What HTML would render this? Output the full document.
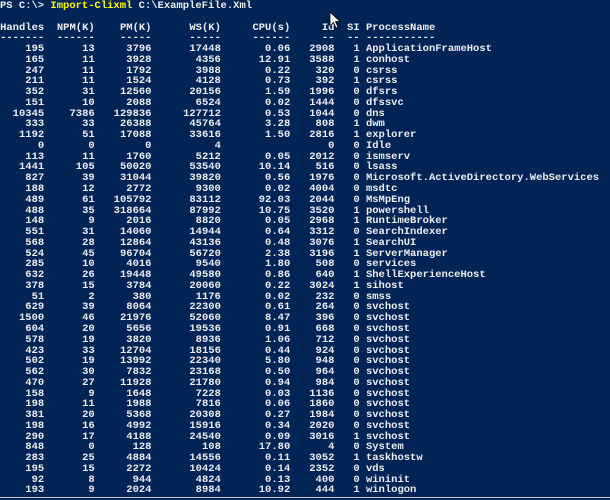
<!DOCTYPE html>
<html><head><meta charset="utf-8"><style>
html,body{margin:0;padding:0;background:#012456;width:610px;height:500px;overflow:hidden}
#t{position:absolute;left:0;top:1px;font-family:"Liberation Mono",monospace;font-size:10.5px;line-height:10.78px;color:#eeedf0;font-weight:bold}
.r{height:10.78px;white-space:pre}
.r span{display:inline-block;text-align:right}
.r span:nth-child(1){width:44.2px}
.r span:nth-child(2){width:50.5px}
.r span:nth-child(3){width:56.8px}
.r span:nth-child(4){width:69.4px}
.r span:nth-child(5){width:69.4px}
.r span:nth-child(6){width:44.2px}
.r span:nth-child(7){width:25.2px}
.r span:nth-child(8){text-align:left;padding-left:6.3px}
.y{color:#ffff00}
</style></head><body>
<div id="t">
<div class="r">PS C:\&gt; <span style="width:auto;text-align:left" class="y">Import-Clixml</span> C:\ExampleFile.Xml</div>
<div class="r"> </div>
<div class="r"><span>Handles</span><span>NPM(K)</span><span>PM(K)</span><span>WS(K)</span><span>CPU(s)</span><span>Id</span><span>SI</span><span>ProcessName</span></div>
<div class="r"><span>-------</span><span>------</span><span>-----</span><span>-----</span><span>------</span><span>--</span><span>--</span><span>-----------</span></div>
<div class="r"><span>195</span><span>13</span><span>3796</span><span>17448</span><span>0.06</span><span>2908</span><span>1</span><span>ApplicationFrameHost</span></div>
<div class="r"><span>165</span><span>11</span><span>3928</span><span>4356</span><span>12.91</span><span>3588</span><span>1</span><span>conhost</span></div>
<div class="r"><span>247</span><span>11</span><span>1792</span><span>3988</span><span>0.22</span><span>320</span><span>0</span><span>csrss</span></div>
<div class="r"><span>211</span><span>11</span><span>1524</span><span>4128</span><span>0.73</span><span>392</span><span>1</span><span>csrss</span></div>
<div class="r"><span>352</span><span>31</span><span>12560</span><span>20156</span><span>1.59</span><span>1996</span><span>0</span><span>dfsrs</span></div>
<div class="r"><span>151</span><span>10</span><span>2088</span><span>6524</span><span>0.02</span><span>1444</span><span>0</span><span>dfssvc</span></div>
<div class="r"><span>10345</span><span>7386</span><span>129836</span><span>127712</span><span>0.53</span><span>1044</span><span>0</span><span>dns</span></div>
<div class="r"><span>333</span><span>33</span><span>26388</span><span>45764</span><span>3.28</span><span>808</span><span>1</span><span>dwm</span></div>
<div class="r"><span>1192</span><span>51</span><span>17088</span><span>33616</span><span>1.50</span><span>2816</span><span>1</span><span>explorer</span></div>
<div class="r"><span>0</span><span>0</span><span>0</span><span>4</span><span></span><span>0</span><span>0</span><span>Idle</span></div>
<div class="r"><span>113</span><span>11</span><span>1760</span><span>5212</span><span>0.05</span><span>2012</span><span>0</span><span>ismserv</span></div>
<div class="r"><span>1441</span><span>105</span><span>50020</span><span>53540</span><span>10.14</span><span>516</span><span>0</span><span>lsass</span></div>
<div class="r"><span>827</span><span>39</span><span>31044</span><span>39820</span><span>0.56</span><span>1976</span><span>0</span><span>Microsoft.ActiveDirectory.WebServices</span></div>
<div class="r"><span>188</span><span>12</span><span>2772</span><span>9300</span><span>0.02</span><span>4004</span><span>0</span><span>msdtc</span></div>
<div class="r"><span>489</span><span>61</span><span>105792</span><span>83112</span><span>92.03</span><span>2044</span><span>0</span><span>MsMpEng</span></div>
<div class="r"><span>488</span><span>35</span><span>318664</span><span>87992</span><span>10.75</span><span>3520</span><span>1</span><span>powershell</span></div>
<div class="r"><span>148</span><span>9</span><span>2016</span><span>8820</span><span>0.05</span><span>2968</span><span>1</span><span>RuntimeBroker</span></div>
<div class="r"><span>551</span><span>31</span><span>14060</span><span>14944</span><span>0.64</span><span>3312</span><span>0</span><span>SearchIndexer</span></div>
<div class="r"><span>568</span><span>28</span><span>12864</span><span>43136</span><span>0.48</span><span>3076</span><span>1</span><span>SearchUI</span></div>
<div class="r"><span>524</span><span>45</span><span>96704</span><span>56720</span><span>2.38</span><span>3196</span><span>1</span><span>ServerManager</span></div>
<div class="r"><span>285</span><span>10</span><span>4016</span><span>9540</span><span>1.80</span><span>508</span><span>0</span><span>services</span></div>
<div class="r"><span>632</span><span>26</span><span>19448</span><span>49580</span><span>0.86</span><span>640</span><span>1</span><span>ShellExperienceHost</span></div>
<div class="r"><span>378</span><span>15</span><span>3784</span><span>20060</span><span>0.22</span><span>3024</span><span>1</span><span>sihost</span></div>
<div class="r"><span>51</span><span>2</span><span>380</span><span>1176</span><span>0.02</span><span>232</span><span>0</span><span>smss</span></div>
<div class="r"><span>629</span><span>39</span><span>8064</span><span>22300</span><span>0.61</span><span>264</span><span>0</span><span>svchost</span></div>
<div class="r"><span>1500</span><span>46</span><span>21976</span><span>52060</span><span>8.47</span><span>396</span><span>0</span><span>svchost</span></div>
<div class="r"><span>604</span><span>20</span><span>5656</span><span>19536</span><span>0.91</span><span>668</span><span>0</span><span>svchost</span></div>
<div class="r"><span>578</span><span>19</span><span>3820</span><span>8936</span><span>1.06</span><span>712</span><span>0</span><span>svchost</span></div>
<div class="r"><span>423</span><span>33</span><span>12704</span><span>18156</span><span>0.44</span><span>924</span><span>0</span><span>svchost</span></div>
<div class="r"><span>502</span><span>19</span><span>13992</span><span>22340</span><span>5.80</span><span>948</span><span>0</span><span>svchost</span></div>
<div class="r"><span>562</span><span>30</span><span>7832</span><span>23168</span><span>0.50</span><span>964</span><span>0</span><span>svchost</span></div>
<div class="r"><span>470</span><span>27</span><span>11928</span><span>21780</span><span>0.94</span><span>984</span><span>0</span><span>svchost</span></div>
<div class="r"><span>158</span><span>9</span><span>1648</span><span>7228</span><span>0.03</span><span>1136</span><span>0</span><span>svchost</span></div>
<div class="r"><span>198</span><span>11</span><span>1988</span><span>7816</span><span>0.06</span><span>1860</span><span>0</span><span>svchost</span></div>
<div class="r"><span>381</span><span>20</span><span>5368</span><span>20308</span><span>0.27</span><span>1984</span><span>0</span><span>svchost</span></div>
<div class="r"><span>198</span><span>16</span><span>4992</span><span>15916</span><span>0.34</span><span>2020</span><span>0</span><span>svchost</span></div>
<div class="r"><span>290</span><span>17</span><span>4188</span><span>24540</span><span>0.09</span><span>3016</span><span>1</span><span>svchost</span></div>
<div class="r"><span>848</span><span>0</span><span>128</span><span>108</span><span>17.80</span><span>4</span><span>0</span><span>System</span></div>
<div class="r"><span>283</span><span>25</span><span>4884</span><span>14556</span><span>0.11</span><span>3052</span><span>1</span><span>taskhostw</span></div>
<div class="r"><span>195</span><span>15</span><span>2272</span><span>10424</span><span>0.14</span><span>2352</span><span>0</span><span>vds</span></div>
<div class="r"><span>92</span><span>8</span><span>944</span><span>4824</span><span>0.13</span><span>400</span><span>0</span><span>wininit</span></div>
<div class="r"><span>193</span><span>9</span><span>2024</span><span>8984</span><span>10.92</span><span>444</span><span>1</span><span>winlogon</span></div>
</div>
<svg style="position:absolute;left:329px;top:11px" width="14" height="20" viewBox="0 0 14 20"><path d="M1 1 L1 15 L4.5 11.5 L7 17 L9 16 L6.5 10.5 L11 10.5 Z" fill="#fff" stroke="#000" stroke-width="0.8"/></svg>
<div style="position:absolute;left:0;top:497px;width:610px;height:1px;background:#c8c8d0"></div>
</body></html>
